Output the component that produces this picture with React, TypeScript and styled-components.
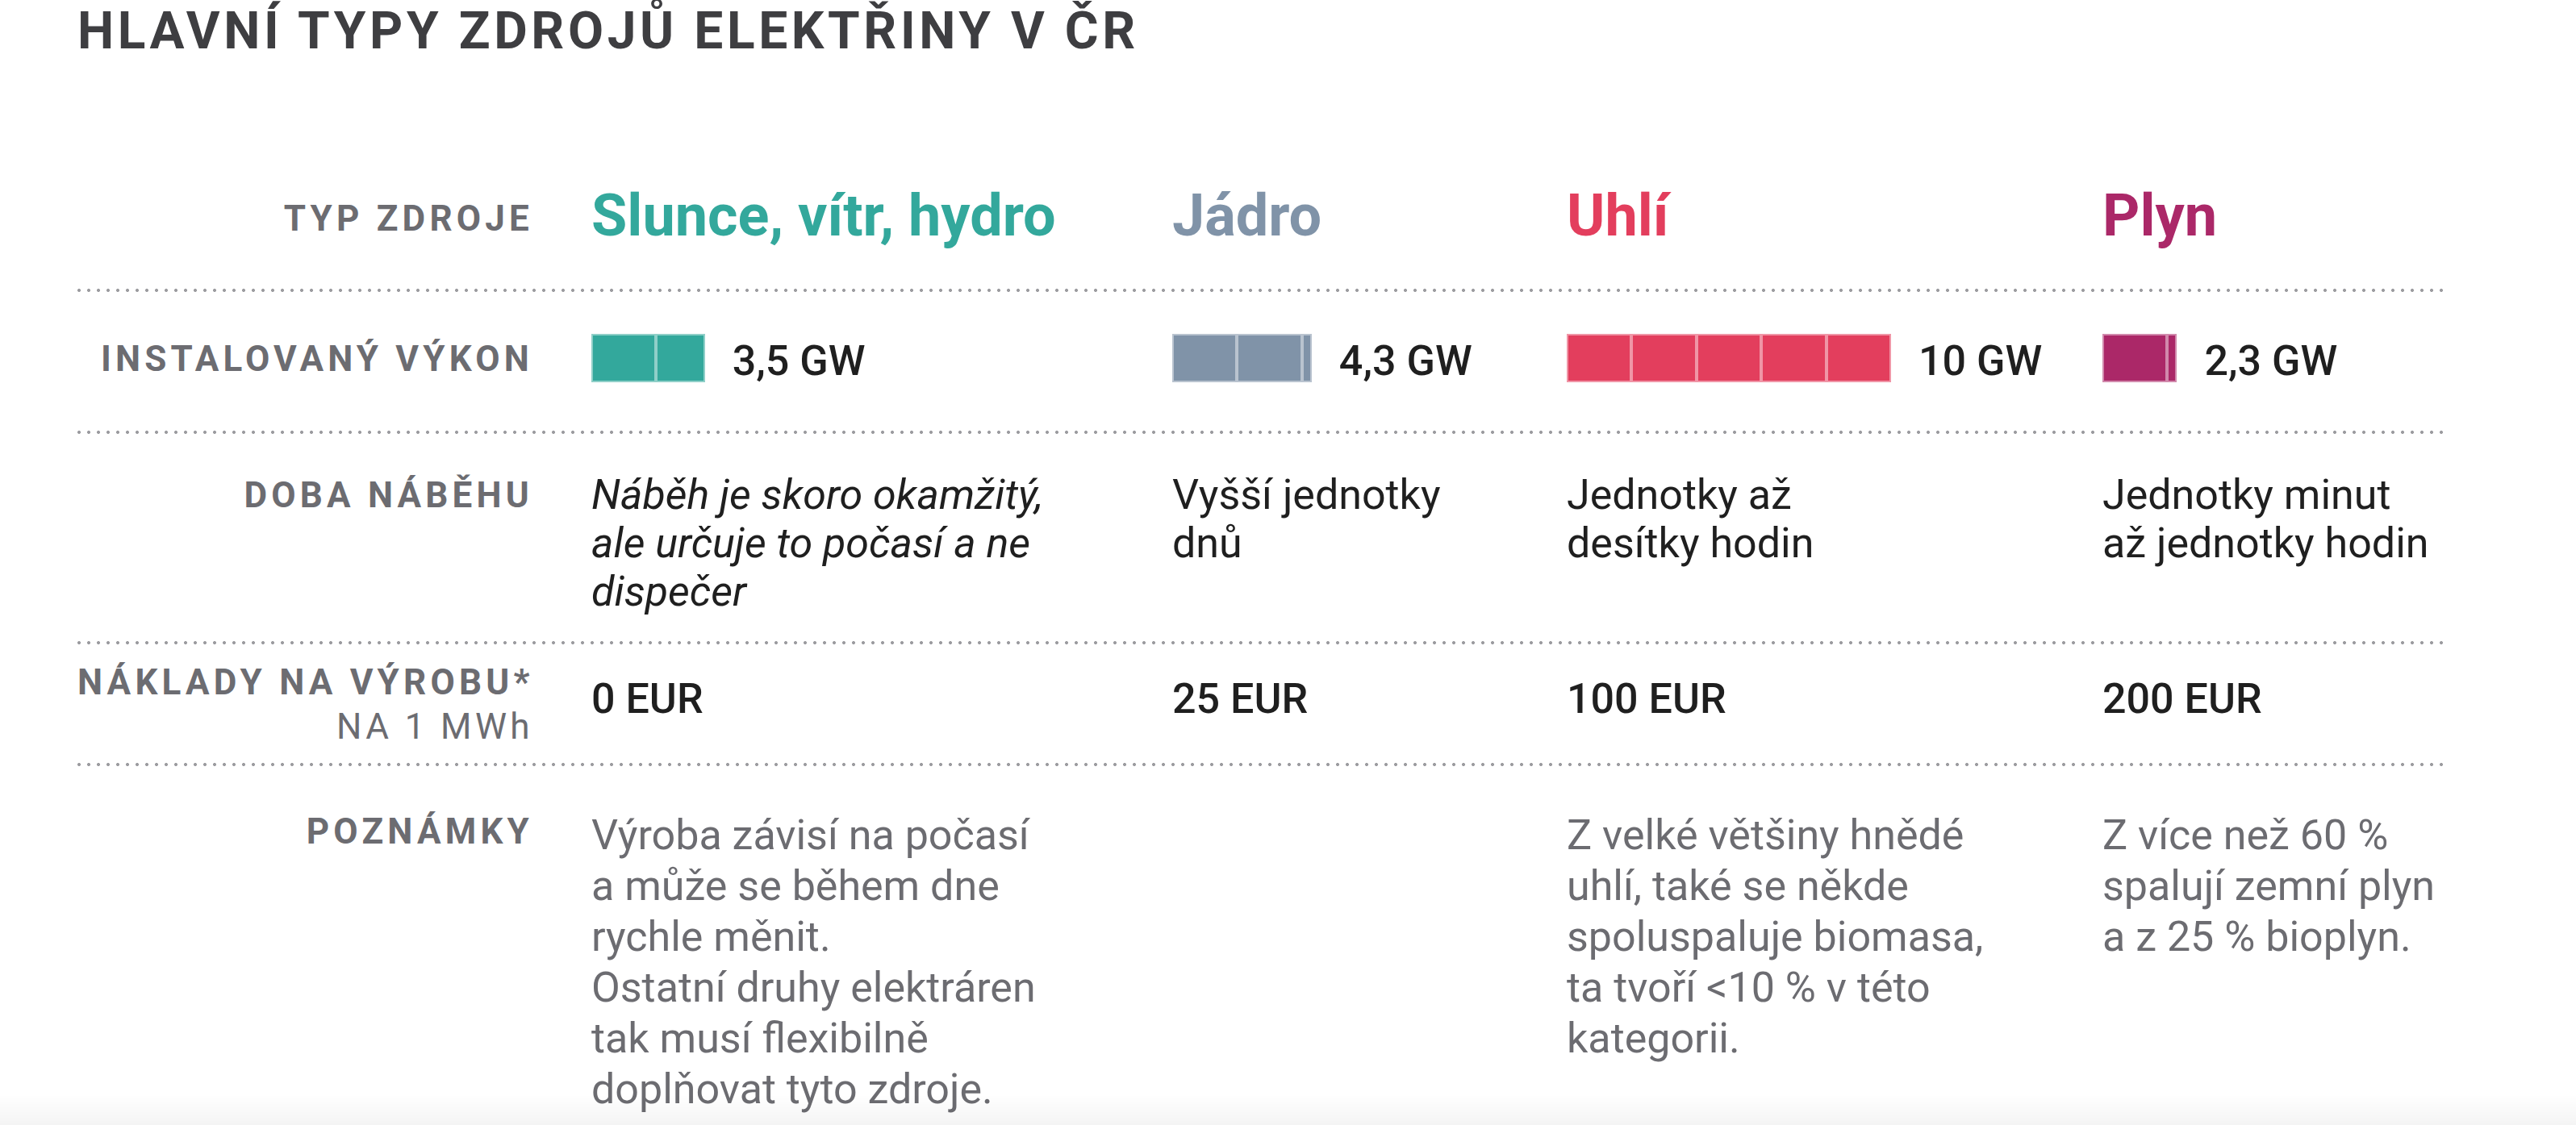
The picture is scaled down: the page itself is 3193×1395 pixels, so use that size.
import React, {Fragment} from "react";
import styled, {createGlobalStyle} from "styled-components";

const GlobalStyle = createGlobalStyle`
  html, body {
    margin: 0;
    padding: 0;
    background: #fff;
    overflow: hidden;
  }
  body {
    font-family: Roboto, "Noto Sans", "Liberation Sans", sans-serif;
    color: #1f1f1f;
  }
`;

// 1 GW = 40.2px, one segment of the bar stands for 2 GW
const GW_PX = 40.2;
const SEGMENT_GW = 2;

const COLUMNS = "637px 720px 489px 664px 428px";

const Page = styled.main`
  padding: 1px 0 0 96px;
  width: 2938px;
`;

const Title = styled.h1`
  margin: 0;
  font-size: 64px;
  line-height: 1.2;
  font-weight: 700;
  letter-spacing: 0.072em;
  text-transform: uppercase;
  color: #3e3e41;
`;

const Row = styled.section<{$align: string; $pad: string}>`
  display: grid;
  grid-template-columns: ${COLUMNS};
  align-items: ${({$align}) => $align};
  padding: ${({$pad}) => $pad};
`;

const Divider = styled.div`
  height: 4px;
  background-image: radial-gradient(circle at 2px 2px, #9c9ca0 1.7px, transparent 2.3px);
  background-size: 12px 4px;
  background-repeat: repeat-x;
`;

const Label = styled.div<{$top?: number}>`
  text-align: right;
  padding-right: 72px;
  margin-top: ${({$top}) => $top ?? 0}px;
  font-size: 44px;
  line-height: 55px;
  font-weight: 700;
  letter-spacing: 0.118em;
  text-transform: uppercase;
  color: #6c6c71;
  white-space: nowrap;
`;

const SubLabel = styled.span`
  display: block;
  font-weight: 400;
  letter-spacing: 0.1em;
  text-transform: none;
`;

const Heading = styled.h2<{$color: string}>`
  margin: 0;
  font-size: 72px;
  line-height: 1.2;
  font-weight: 700;
  color: ${({$color}) => $color};
  white-space: nowrap;
`;

const BarCell = styled.div`
  display: flex;
  align-items: center;
`;

const BarTrack = styled.div`
  display: flex;
  height: 60px;
`;

const Segment = styled.div<{$color: string}>`
  box-sizing: border-box;
  height: 100%;
  background: ${({$color}) => $color};
  border: 2px solid rgba(255, 255, 255, 0.45);
`;

const Value = styled.div`
  font-size: 52px;
  line-height: 1.2;
  font-weight: 500;
  color: #1f1f1f;
  white-space: nowrap;
`;

const BarValue = styled(Value)`
  margin-left: 34px;
  padding-top: 8px;
`;

const CostValue = styled(Value)`
  padding-bottom: 12px;
`;

const Text = styled.p<{$italic?: boolean}>`
  margin: 0;
  font-size: 52px;
  line-height: 60px;
  font-style: ${({$italic}) => ($italic ? "italic" : "normal")};
  color: #1f1f1f;
  white-space: nowrap;
`;

const Note = styled.p`
  margin: 3px 0 0;
  font-size: 52px;
  line-height: 63px;
  color: #6c6c71;
  white-space: nowrap;
`;

const BottomShade = styled.div`
  position: fixed;
  left: 0;
  right: 0;
  bottom: 0;
  height: 38px;
  pointer-events: none;
  background: linear-gradient(rgba(0, 0, 0, 0), rgba(0, 0, 0, 0.045));
`;

type Source = {
  name: string;
  color: string;
  gw: number;
  gwLabel: string;
  start: string[];
  italic?: boolean;
  cost: string;
  notes: string[];
};

const sources: Source[] = [
  {
    name: "Slunce, vítr, hydro",
    color: "#33a89c",
    gw: 3.5,
    gwLabel: "3,5 GW",
    start: ["Náběh je skoro okamžitý,", "ale určuje to počasí a ne", "dispečer"],
    italic: true,
    cost: "0 EUR",
    notes: [
      "Výroba závisí na počasí",
      "a může se během dne",
      "rychle měnit.",
      "Ostatní druhy elektráren",
      "tak musí flexibilně",
      "doplňovat tyto zdroje.",
    ],
  },
  {
    name: "Jádro",
    color: "#8093a8",
    gw: 4.3,
    gwLabel: "4,3 GW",
    start: ["Vyšší jednotky", "dnů"],
    cost: "25 EUR",
    notes: [],
  },
  {
    name: "Uhlí",
    color: "#e33e5d",
    gw: 10,
    gwLabel: "10 GW",
    start: ["Jednotky až", "desítky hodin"],
    cost: "100 EUR",
    notes: [
      "Z velké většiny hnědé",
      "uhlí, také se někde",
      "spoluspaluje biomasa,",
      "ta tvoří <10 % v této",
      "kategorii.",
    ],
  },
  {
    name: "Plyn",
    color: "#ab2868",
    gw: 2.3,
    gwLabel: "2,3 GW",
    start: ["Jednotky minut", "až jednotky hodin"],
    cost: "200 EUR",
    notes: ["Z více než 60 %", "spalují zemní plyn", "a z 25 % bioplyn."],
  },
];

const Lines = ({lines}: {lines: string[]}) => (
  <>
    {lines.map((line, i) => (
      <Fragment key={i}>
        {i > 0 && <br />}
        {line}
      </Fragment>
    ))}
  </>
);

const Bar = ({gw, color}: {gw: number; color: string}) => {
  const parts: number[] = [];
  for (let rest = gw; rest > 0.001; rest -= SEGMENT_GW) {
    parts.push(Math.min(SEGMENT_GW, rest));
  }
  return (
    <BarTrack>
      {parts.map((part, i) => (
        <Segment key={i} $color={color} style={{width: part * GW_PX}} />
      ))}
    </BarTrack>
  );
};

export default function App() {
  return (
    <>
      <GlobalStyle />
      <Page>
        <Title>Hlavní typy zdrojů elektřiny v ČR</Title>

        <Row $align="center" $pad="147px 0 47px">
          <Label $top={8}>Typ zdroje</Label>
          {sources.map((s) => (
            <Heading key={s.name} $color={s.color}>
              {s.name}
            </Heading>
          ))}
        </Row>
        <Divider />

        <Row $align="center" $pad="47px 0 54px">
          <Label $top={2}>Instalovaný výkon</Label>
          {sources.map((s) => (
            <BarCell key={s.name}>
              <Bar gw={s.gw} color={s.color} />
              <BarValue>{s.gwLabel}</BarValue>
            </BarCell>
          ))}
        </Row>
        <Divider />

        <Row $align="start" $pad="46px 0 31px">
          <Label $top={3}>Doba náběhu</Label>
          {sources.map((s) => (
            <Text key={s.name} $italic={s.italic}>
              <Lines lines={s.start} />
            </Text>
          ))}
        </Row>
        <Divider />

        <Row $align="center" $pad="20px 0 17px">
          <Label>
            Náklady na výrobu*
            <SubLabel>NA 1 MWh</SubLabel>
          </Label>
          {sources.map((s) => (
            <CostValue key={s.name}>{s.cost}</CostValue>
          ))}
        </Row>
        <Divider />

        <Row $align="start" $pad="51px 0 0">
          <Label $top={3}>Poznámky</Label>
          {sources.map((s) => (
            <Note key={s.name}>
              <Lines lines={s.notes} />
            </Note>
          ))}
        </Row>
      </Page>
      <BottomShade />
    </>
  );
}
